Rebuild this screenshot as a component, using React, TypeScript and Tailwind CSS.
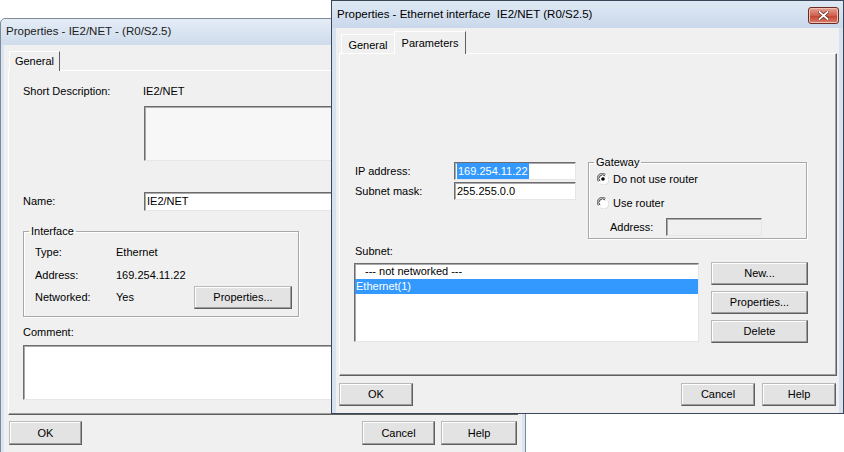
import React from "react"

const btnCls =
  "flex items-center justify-center bg-[#e3e3e3] border border-t-[#b9b9b9] border-l-[#b9b9b9] border-r-[#5f5f5f] border-b-[#5f5f5f] shadow-[inset_-1px_-1px_0_#9d9d9d,inset_1px_1px_0_#ffffff] text-[11px] text-black"

const inputCls =
  "flex items-center bg-white border border-t-[#6d6d6d] border-l-[#6d6d6d] border-r-[#e6e6e6] border-b-[#e6e6e6] shadow-[inset_1px_1px_0_#a9a9a9] text-[11px] text-black"

const panelCls =
  "bg-[#f0f0f0] border border-t-[#ffffff] border-l-[#ffffff] border-r-[#5f5f5f] border-b-[#5f5f5f] shadow-[inset_-1px_-1px_0_#a0a0a0]"

function Btn({ children, className = "" }: { children: React.ReactNode; className?: string }) {
  return <div className={`${btnCls} ${className}`}>{children}</div>
}

function Radio({ checked }: { checked?: boolean }) {
  return (
    <svg width="12" height="12" viewBox="0 0 12 12" className="shrink-0">
      <circle cx="6" cy="6" r="5.5" fill="#ffffff" />
      <path d="M1.5 8.5 A5 5 0 0 1 8.5 1.5" stroke="#7d7d7d" strokeWidth="1.2" fill="none" />
      <path d="M3 8.2 A3.6 3.6 0 0 1 8.2 3" stroke="#3c3c3c" strokeWidth="1" fill="none" />
      <path d="M10.6 3.5 A5 5 0 0 1 3.5 10.6" stroke="#dcdcdc" strokeWidth="1" fill="none" />
      {checked && <circle cx="6" cy="6" r="1.8" fill="#000000" />}
    </svg>
  )
}

function CloseButton() {
  return (
    <div className="ml-auto mr-[4px] mt-[6px] self-start w-[31px] h-[17px] rounded-[3px] border border-[#6b2a22] bg-[linear-gradient(#e8a496,#d0604e_50%,#c2412e_51%,#d8806c)] flex items-center justify-center shadow-[inset_0_0_0_1px_#f1c1b6]">
      <svg width="11" height="9" viewBox="0 0 11 9">
        <path d="M1.5 1 L9.5 8 M9.5 1 L1.5 8" stroke="#5a1a12" strokeWidth="3.2" strokeLinecap="square" />
        <path d="M1.5 1 L9.5 8 M9.5 1 L1.5 8" stroke="#ffffff" strokeWidth="1.9" strokeLinecap="square" />
      </svg>
    </div>
  )
}

function BackWindow() {
  return (
    <div className="absolute left-0 top-[18px] w-[526px] h-[450px] border border-[#7d8a99] rounded-t-[5px] bg-[#dbe5f1] flex flex-col">
      <div className="h-[26px] shrink-0 flex items-center pl-[5px] text-[11.5px] text-[#202020] bg-[linear-gradient(#e4ecf6,#cfdcec)] rounded-t-[5px]">
        Properties - IE2/NET - (R0/S2.5)
      </div>
      <div className="mx-[3px] flex-1 bg-[#f0f0f0] flex flex-col">
        <div className="h-[25px] flex items-end pl-[5px]">
          <div className="relative z-10 -mb-px h-[20px] w-[51px] bg-[#f0f0f0] border border-b-0 border-t-white border-l-white border-r-[#5f5f5f] flex items-center justify-center text-[11px]">
            General
          </div>
        </div>
        <div className={`${panelCls} mx-[4px] h-[345px] flex flex-col pl-[14px] pt-[13px] text-[11px]`}>
          <div className="h-[14px] flex items-center">
            <span className="w-[120px]">Short Description:</span>
            <span>IE2/NET</span>
          </div>
          <div className={`${inputCls} mt-[8px] ml-[121px] h-[55px] w-[360px] !bg-[#f7f7f7]`} />
          <div className="mt-[31px] h-[19px] flex items-center">
            <span className="w-[121px]">Name:</span>
            <div className={`${inputCls} h-[19px] w-[360px] pl-[2px]`}>IE2/NET</div>
          </div>
          <fieldset className="mt-[14px] w-[276px] h-[92px] border border-[#a8a8a8] shadow-[inset_1px_1px_0_#ffffff,1px_1px_0_#ffffff] pl-[11px]">
            <legend className="-ml-[6px] px-[2px] leading-[13px]">Interface</legend>
            <div className="mt-[7px] h-[14px] flex items-center">
              <span className="w-[81px]">Type:</span>
              <span>Ethernet</span>
            </div>
            <div className="mt-[9px] h-[14px] flex items-center">
              <span className="w-[81px]">Address:</span>
              <span>169.254.11.22</span>
            </div>
            <div className="mt-[4px] h-[23px] flex items-center">
              <span className="w-[81px]">Networked:</span>
              <span className="w-[78px]">Yes</span>
              <Btn className="w-[98px] h-[23px]">Properties...</Btn>
            </div>
          </fieldset>
          <div className="mt-[8px] h-[14px] flex items-center">Comment:</div>
          <div className={`${inputCls} mt-[6px] h-[55px] w-[481px]`} />
        </div>
        <div className="mt-[6px] flex pl-[5px] pr-[5px] gap-[6px]">
          <Btn className="w-[73px] h-[24px]">OK</Btn>
          <Btn className="ml-auto w-[73px] h-[24px]">Cancel</Btn>
          <Btn className="w-[76px] h-[24px]">Help</Btn>
        </div>
      </div>
    </div>
  )
}

function FrontWindow() {
  return (
    <div className="absolute left-[331px] top-0 w-[513px] h-[414px] border border-[#3a4758] bg-[#d6e2ef] flex flex-col">
      <div className="h-[27px] shrink-0 flex items-center pl-[5px] text-[11.5px] text-black bg-[linear-gradient(#dfe9f5,#c9d8ea)]">
        <span>Properties - Ethernet interface&nbsp; IE2/NET (R0/S2.5)</span>
        <CloseButton />
      </div>
      <div className="mx-[4px] flex-1 bg-[#f0f0f0] flex flex-col">
        <div className="h-[25px] flex items-end pl-[5px] text-[11px]">
          <div className="-mb-px h-[20px] w-[54px] bg-[#f0f0f0] border border-b-0 border-t-white border-l-white border-r-[#a0a0a0] flex items-center justify-center pt-[1px]">
            General
          </div>
          <div className="relative z-10 -mb-px -ml-px h-[23px] w-[72px] bg-[#f0f0f0] border border-b-0 border-t-white border-l-white border-r-[#5f5f5f] flex items-center justify-center">
            Parameters
          </div>
        </div>
        <div className={`${panelCls} ml-[3px] mr-[2px] h-[323px] flex flex-col text-[11px]`}>
          <div className="pt-[102px] flex items-start">
            <div className="pl-[15px] pt-[6px] flex flex-col">
              <div className="h-[18px] flex items-center">
                <span className="w-[99px]">IP address:</span>
                <div className={`${inputCls} h-[18px] w-[122px] pl-[2px]`}>
                  <span className="bg-[#3399ff] text-white px-[1px]">169.254.11.22</span>
                </div>
              </div>
              <div className="mt-[2px] h-[18px] flex items-center">
                <span className="w-[99px]">Subnet mask:</span>
                <div className={`${inputCls} h-[18px] w-[122px] pl-[2px]`}>255.255.0.0</div>
              </div>
            </div>
            <fieldset className="ml-[12px] w-[219px] h-[83px] border border-[#a8a8a8] shadow-[inset_1px_1px_0_#ffffff,1px_1px_0_#ffffff] pl-[8px]">
              <legend className="-ml-[3px] px-[2px] leading-[13px]">Gateway</legend>
              <div className="mt-[3px] h-[14px] flex items-center gap-[4px]">
                <Radio checked />
                <span>Do not use router</span>
              </div>
              <div className="mt-[10px] h-[14px] flex items-center gap-[4px]">
                <Radio />
                <span>Use router</span>
              </div>
              <div className="mt-[8px] h-[18px] flex items-center">
                <span className="ml-[13px] w-[56px]">Address:</span>
                <div className={`${inputCls} h-[18px] w-[96px] !bg-[#f0f0f0]`} />
              </div>
            </fieldset>
          </div>
          <div className="mt-[5px] h-[14px] flex items-center pl-[15px]">Subnet:</div>
          <div className="mt-[5px] flex items-start pl-[14px]">
            <div className={`${inputCls} !items-stretch flex-col h-[79px] w-[345px]`}>
              <div className="h-[15px] flex items-center pl-[10px]">--- not networked ---</div>
              <div className="h-[15px] flex items-center pl-px bg-[#3399ff] text-white">Ethernet(1)</div>
            </div>
            <div className="ml-[12px] -mt-px flex flex-col gap-[6px]">
              <Btn className="w-[97px] h-[23px]">New...</Btn>
              <Btn className="w-[97px] h-[23px]">Properties...</Btn>
              <Btn className="w-[97px] h-[23px]">Delete</Btn>
            </div>
          </div>
        </div>
        <div className="mt-[7px] flex pl-[3px] pr-[3px] gap-[7px]">
          <Btn className="w-[74px] h-[23px]">OK</Btn>
          <Btn className="ml-auto w-[74px] h-[23px]">Cancel</Btn>
          <Btn className="w-[74px] h-[23px]">Help</Btn>
        </div>
      </div>
    </div>
  )
}

export default function App() {
  return (
    <div className="relative w-[844px] h-[452px] overflow-hidden bg-white text-black font-['Liberation_Sans',Arial,sans-serif]">
      <BackWindow />
      <FrontWindow />
    </div>
  )
}
